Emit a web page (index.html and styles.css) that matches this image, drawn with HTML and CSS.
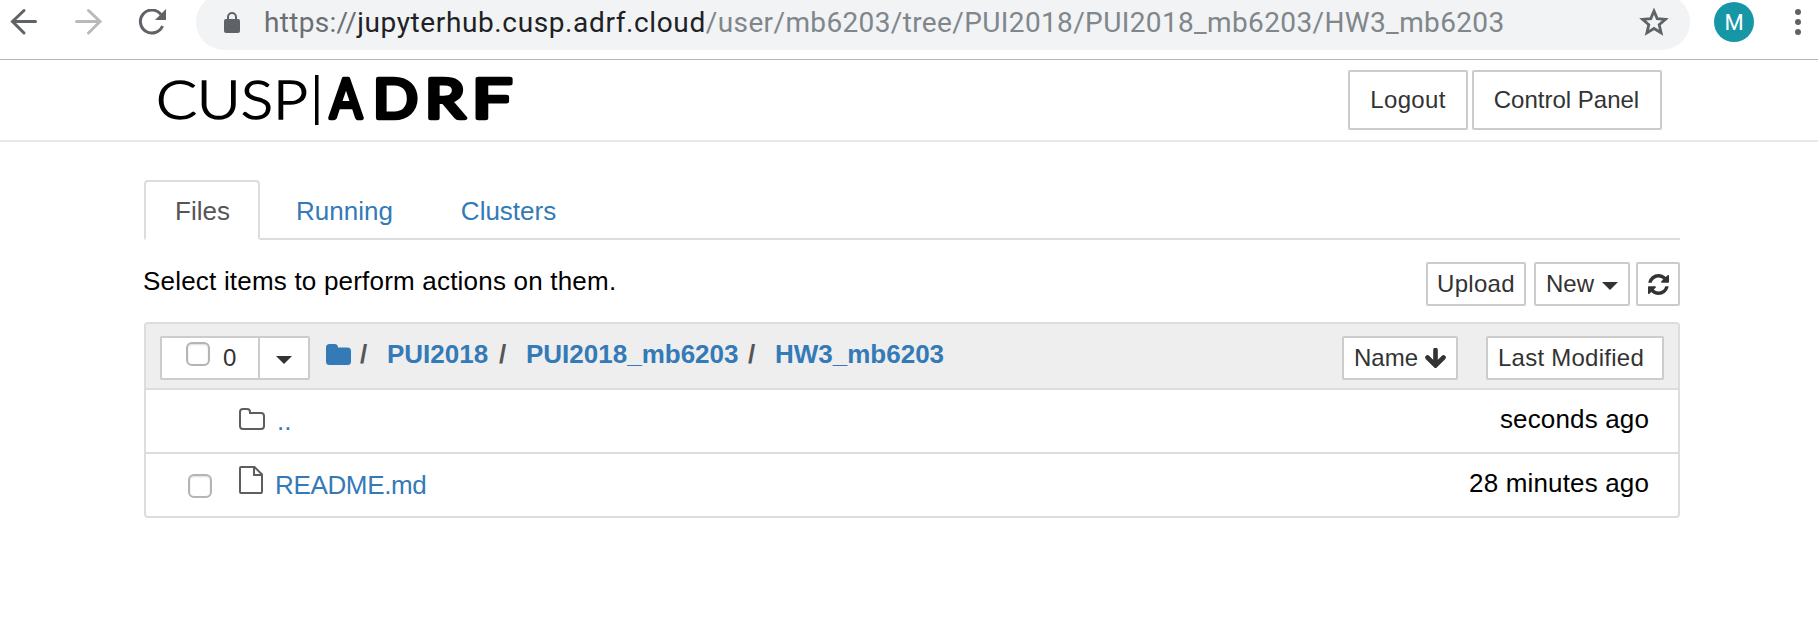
FILE: index.html
```html
<!DOCTYPE html>
<html lang="en">
<head>
<meta charset="utf-8">
<title>HW3_mb6203/</title>
<link rel="stylesheet" href="styles.css">
</head>
<body>
<div class="chrome">
  <div class="nav-icons">
    <svg class="nav-icon" width="28" height="32" viewBox="0 0 28 32"><path d="M25.500 15.500H3M14 4.500 2.500 15.500l11.500 11.500" fill="none" stroke="#5f6368" stroke-width="3" stroke-linecap="round"/></svg>
    <svg class="nav-icon" width="28" height="32" viewBox="0 0 28 32"><path d="M2.500 15.500h23M14.500 4.500l11.500 11-11.500 11.500" fill="none" stroke="#bababa" stroke-width="3" stroke-linecap="round"/></svg>
    <svg class="nav-icon" width="28" height="28" viewBox="0 0 28 28"><path d="M23 5.500A11.500 11.500 0 1 0 24.500 17" fill="none" stroke="#5f6368" stroke-width="3"/><path d="M28 0v11H17z" fill="#5f6368"/></svg>
  </div>
  <div class="omnibox">
    <svg class="lock" width="16" height="22" viewBox="0 0 16 22"><rect y="7" width="16" height="14" rx="2" fill="#5f6368"/><path d="M4 8V5a4 4 0 0 1 8 0v3" fill="none" stroke="#5f6368" stroke-width="2"/></svg>
    <div class="url"><span class="scheme">https://</span><span class="host">jupyterhub.cusp.adrf.cloud</span><span class="path">/user/mb6203/tree/PUI2018/PUI2018_mb6203/HW3_mb6203</span></div>
    <svg class="star" width="30" height="30" viewBox="0 0 30 30"><path d="M15 4l3.200 7.600 8.200.7-6.200 5.400 1.900 8.200-7.100-4.400-7.100 4.400 1.900-8.200-6.200-5.400 8.200-.7z" fill="none" stroke="#5f6368" stroke-width="2.800"/></svg>
  </div>
  <div class="avatar">M</div>
  <svg class="kebab" width="6" height="26" viewBox="0 0 6 26" fill="#5f6368"><circle cx="3" cy="3" r="3"/><circle cx="3" cy="13" r="3"/><circle cx="3" cy="23" r="3"/></svg>
</div>
<header class="header">
  <svg class="logo" width="370" height="70" viewBox="0 0 370 70">
    <text class="logo-thin" x="-1" y="54.500" textLength="152" lengthAdjust="spacingAndGlyphs">CUSP</text>
    <rect x="158" y="11" width="3.500" height="50"/>
    <g class="logo-bold">
      <text x="173" y="54" textLength="32" lengthAdjust="spacingAndGlyphs">A</text>
      <text x="216" y="54" textLength="45" lengthAdjust="spacingAndGlyphs">D</text>
      <text x="268" y="54" textLength="40" lengthAdjust="spacingAndGlyphs">R</text>
      <text x="315" y="54" textLength="40" lengthAdjust="spacingAndGlyphs">F</text>
    </g>
  </svg>
  <div class="header-buttons">
    <button class="btn btn-large logout">Logout</button>
    <button class="btn btn-large control">Control Panel</button>
  </div>
</header>
<main class="main">
  <nav class="tabs">
    <a class="tab tab-active">Files</a>
    <a class="tab tab-running">Running</a>
    <a class="tab">Clusters</a>
  </nav>
  <div class="toolbar">
    <div class="hint">Select items to perform actions on them.</div>
    <div class="tools">
      <button class="btn upload">Upload</button>
      <button class="btn new">New<span class="caret"></span></button>
      <button class="btn refresh"><svg width="21" height="21" viewBox="0 0 1536 1536"><path fill="#333" d="M1511 928q0 5-1 7-64 268-268 434.500T764 1536q-146 0-282.500-55T238 1324l-129 129q-19 19-45 19t-45-19-19-45V960q0-26 19-45t45-19h448q26 0 45 19t19 45-19 45l-137 137q71 66 161 102t187 36q134 0 250-65t186-179q11-17 53-117 8-23 30-23h192q13 0 22.500 9.500t9.500 22.500zm25-800v448q0 26-19 45t-45 19h-448q-26 0-45-19t-19-45 19-45l138-138Q969 256 768 256q-134 0-250 65T332 500q-11 17-53 117-8 23-30 23H50q-13 0-22.500-9.500T18 608v-7q65-268 270-434.500T768 0q146 0 284 55.500T1297 212l130-129q19-19 45-19t45 19 19 45z"/></svg></button>
    </div>
  </div>
  <section class="list">
    <div class="list-header">
      <div class="select-group">
        <button class="btn select-all"><span class="check"></span>0</button>
        <button class="btn select-menu"><span class="caret"></span></button>
      </div>
      <div class="breadcrumb">
        <svg class="crumb-folder" width="25" height="21" viewBox="0 0 25 21"><path fill="#337ab7" d="M0 3.500Q0 0 3.500 0h5Q12 0 12 3.500h9.500Q25 3.500 25 7v10.500q0 3.500-3.500 3.500h-18Q0 21 0 17.500z"/></svg>
        <span class="slash">/</span><a class="crumb crumb-a">PUI2018</a>
        <span class="slash">/</span><a class="crumb crumb-b">PUI2018_mb6203</a>
        <span class="slash">/</span><a class="crumb crumb-c">HW3_mb6203</a>
      </div>
      <div class="sorters">
        <button class="btn sort-name">Name<svg width="21" height="20" viewBox="0 0 21 20"><path d="M10.500 2v14M2.500 9.500l8 8 8-8" fill="none" stroke="#333" stroke-width="4.600" stroke-linecap="round"/></svg></button>
        <button class="btn sort-date">Last Modified</button>
      </div>
    </div>
    <div class="row">
      <svg class="folder" width="26" height="22" viewBox="0 0 26 22"><path d="M1 4Q1 1 4 1h4q3 0 3 3v1h11q3 0 3 3v10q0 3-3 3H4q-3 0-3-3z" fill="none" stroke="#5e5e5e" stroke-width="2"/></svg>
      <a class="item up">..</a>
      <span class="time">seconds ago</span>
    </div>
    <div class="row">
      <span class="check"></span>
      <svg class="file" width="24" height="28" viewBox="0 0 24 28"><path d="M2 1h13.500L23 8.500V26q0 1-1 1H2q-1 0-1-1V2q0-1 1-1zM15 1v8h8" fill="none" stroke="#5e5e5e" stroke-width="2"/></svg>
      <a class="item readme">README.md</a>
      <span class="time">28 minutes ago</span>
    </div>
  </section>
</main>
</body>
</html>
```
FILE: styles.css
```css
* { box-sizing: border-box; }
body { margin: 0; width: 1818px; height: 618px; overflow: hidden; background: #fff; color: #000; font: 26px/36px "Liberation Sans", Arial, sans-serif; }
.chrome { display: flex; height: 60px; border-bottom: 1px solid #b4b4b4; }
.nav-icons { display: flex; gap: 36px; width: 196px; padding-left: 10px; }
.nav-icon { display: block; margin-top: 6px; }
.nav-icon:last-child { margin-top: 9px; }
.omnibox { display: flex; width: 1494px; height: 56px; margin-top: -6px; border-radius: 28px; background: #f1f3f4; }
.lock { margin: 18px 0 0 28px; }
.url { width: 1399px; padding: 11px 0 0 24px; font: 28px/36px Roboto, sans-serif; white-space: nowrap; color: #80868b; }
.scheme { letter-spacing: 0.3px; color: #6b6f74; }
.host { letter-spacing: 0.62px; color: #202124; }
.path { letter-spacing: 0.37px; }
.star { margin-top: 13px; }
.avatar { width: 40px; height: 40px; margin: 2px 0 0 24px; border-radius: 50%; background: #1797a6; color: #fff; font: 22px/41px Roboto, sans-serif; text-align: center; }
.kebab { margin: 9px 0 0 41px; }
.header { display: flex; justify-content: space-between; height: 82px; padding: 10px 156px 0 157px; border-bottom: 2px solid #e7e7e7; }
.logo { margin-top: -6px; }
.logo-thin { font: 300 54px Lato, sans-serif; stroke: #000; stroke-width: 1.500px; }
.logo-bold { font: 400 54px Lato, sans-serif; stroke: #000; stroke-width: 4.500px; stroke-linejoin: round; }
.header-buttons { display: flex; gap: 4px; }
.btn { display: flex; align-items: center; justify-content: center; height: 44px; padding: 0; border: 2px solid #ccc; border-radius: 2px; background: #fff; color: #333; font: 24px/36px "Liberation Sans", Arial, sans-serif; white-space: nowrap; }
.btn-large { height: 60px; }
.logout { width: 120px; letter-spacing: 0.35px; }
.control { width: 190px; padding-right: 1px; }
.main { width: 1536px; margin: 38px 0 0 144px; }
.tabs { display: flex; height: 60px; border-bottom: 2px solid #ddd; }
.tab { height: 60px; margin-right: 4px; padding: 11px 28px 0 29px; border: 2px solid transparent; line-height: 36px; color: #337ab7; }
.tab-active { width: 116px; border-color: #ddd #ddd #fff; border-radius: 4px 4px 0 0; color: #555; }
.tab-running { padding: 11px 31px 0 30px; }
.toolbar { display: flex; justify-content: space-between; height: 82px; padding-top: 22px; }
.hint { margin: 1px 0 0 -1px; letter-spacing: 0.2px; }
.tools { display: flex; gap: 8px; }
.upload { width: 100px; letter-spacing: 0.3px; }
.new { width: 96px; }
.refresh { width: 44px; margin-left: -2px; }
.caret { border: 8px solid transparent; border-top-color: currentColor; border-bottom: 0; margin: 3px 0 0 8px; }
.list { height: 196px; border: 2px solid #ddd; border-radius: 4px; overflow: hidden; }
.list-header { display: flex; height: 66px; padding: 12px 14px 0; border-bottom: 2px solid #ddd; background: #eee; }
.select-group { display: flex; width: 150px; }
.select-all { width: 100px; justify-content: flex-start; padding-left: 24px; }
.select-all .check { margin: -8px 13px 0 0; }
.select-menu { width: 52px; margin-left: -2px; }
.select-menu .caret { margin: 4px 0 0; }
.check { flex: none; width: 24px; height: 24px; border: 2px solid #b4b4b4; border-radius: 6px; background: #fff; box-shadow: inset 0 1px 2px #ddd; }
.breadcrumb { display: flex; width: 1032px; padding-left: 16px; line-height: 36px; font-weight: 700; color: #337ab7; }
.crumb-folder { margin: 8px 9px 0 0; }
.slash { width: 10px; margin-right: 17px; color: #555; }
.crumb { margin-right: 10px; }
.crumb-a { width: 102px; }
.crumb-b { width: 212px; }
.sorters { display: flex; gap: 28px; }
.sort-name { width: 116px; }
.sort-name svg { margin-left: 7px; }
.sort-date { width: 178px; padding-right: 8px; letter-spacing: 0.25px; }
.row { display: flex; height: 62px; padding-right: 29px; }
.row + .row { height: 64px; border-top: 2px solid #ddd; }
.folder { margin: 18px 0 0 93px; }
.up { padding-left: 12px; }
.row .check { margin: 20px 0 0 42px; }
.file { margin: 12px 12px 0 27px; }
.item { line-height: 36px; margin-top: 13px; color: #337ab7; }
.readme { letter-spacing: -0.35px; }
.time { margin: 11px 0 0 auto; letter-spacing: 0.15px; }
```
